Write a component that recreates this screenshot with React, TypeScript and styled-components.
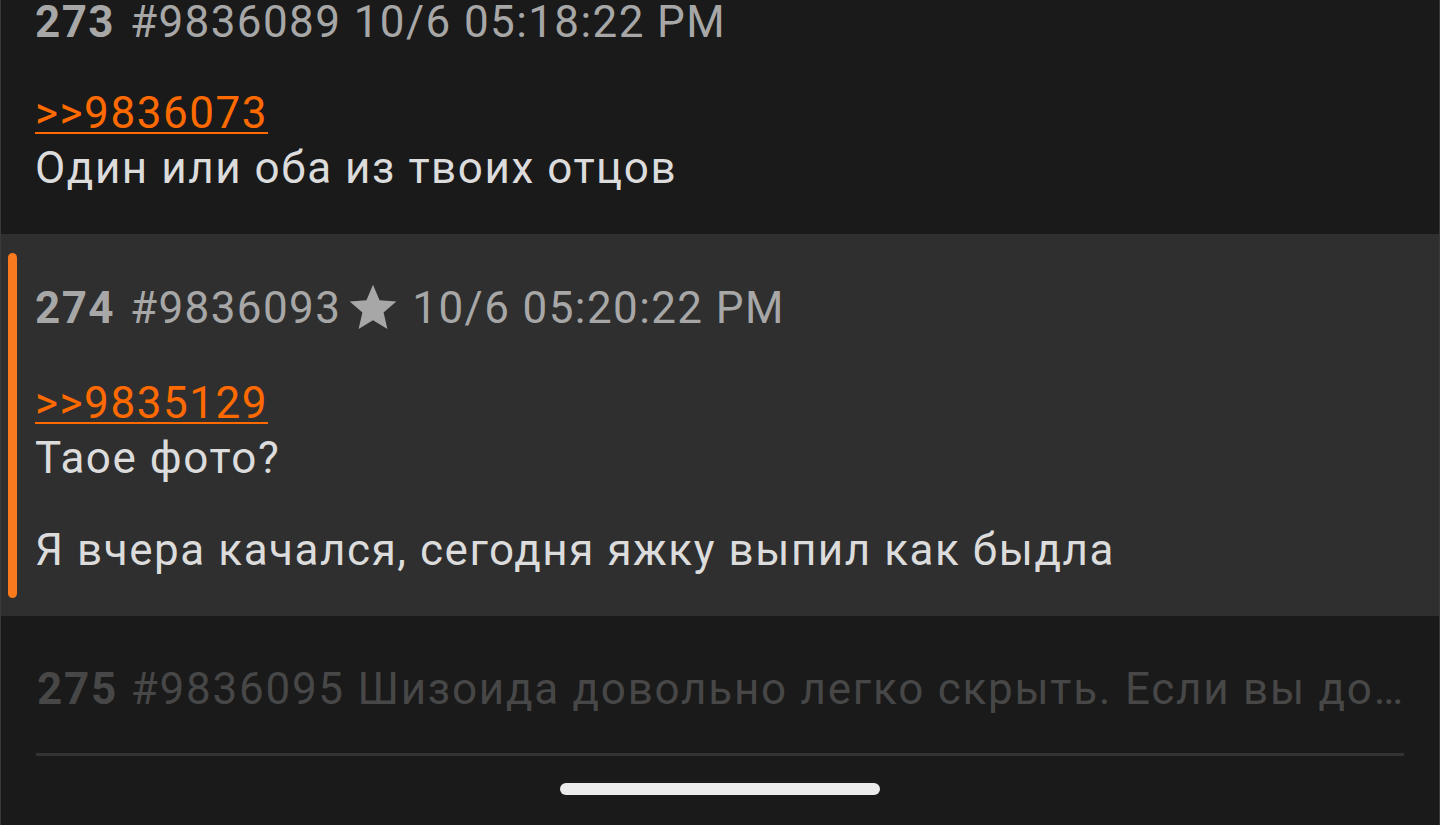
import React from "react";
import styled, { createGlobalStyle } from "styled-components";

const GlobalStyle = createGlobalStyle`
  html, body { margin: 0; padding: 0; background: #1a1a1a; }
  body { font-family: Roboto, "Noto Sans", sans-serif; overflow: hidden; }
`;

const Screen = styled.div`
  width: 1440px;
  height: 825px;
  box-sizing: border-box;
  overflow: hidden;
  background: #1a1a1a;
  border-left: 1px solid #3a3a3a;
  border-right: 1px solid #3a3a3a;
  display: flex;
  flex-direction: column;
`;

const List = styled.div`
  margin-top: -48px;
  display: flex;
  flex-direction: column;
`;

const Post = styled.article<{ $highlight?: boolean }>`
  position: relative;
  background: ${(p) => (p.$highlight ? "#2f2f2f" : "transparent")};
  padding: 46px 34px 42px 34px;
  font-size: 44px;
  line-height: 48px;
  letter-spacing: 1.4px;
`;

const Marker = styled.span`
  position: absolute;
  left: 7px;
  top: 19px;
  bottom: 18px;
  width: 9px;
  border-radius: 5px;
  background: #f87a1c;
`;

const Header = styled.div`
  display: flex;
  align-items: center;
  color: #a7a7a7;
  white-space: nowrap;
`;

const Num = styled.span`
  font-weight: 700;
  margin-right: 15px;
`;

const Star = styled.svg`
  width: 56px;
  height: 56px;
  margin: 0 11px 0 4px;
  fill: #a7a7a7;
`;

const Body = styled.div`
  margin-top: 43px;
  color: #dcdcdc;
  letter-spacing: 1.55px;
`;

const Reply = styled.a`
  display: block;
  width: fit-content;
  color: #ff6a00;
  text-decoration: underline;
  text-decoration-thickness: 2px;
  text-underline-offset: 4px;
  margin-bottom: 7px;
`;

const Para = styled.p`
  margin: 0;
`;

const Gap = styled.div`
  height: 44px;
`;

const Collapsed = styled.div`
  padding: 49px 35px 40px 36px;
  font-size: 44px;
  line-height: 48px;
  letter-spacing: 1.75px;
  color: #474747;
  white-space: nowrap;
  overflow: hidden;
  text-overflow: ellipsis;
`;

const CollapsedNum = styled.span`
  font-weight: 700;
`;

const Divider = styled.div`
  height: 3px;
  margin: 0 35px;
  background: #333333;
`;

const HomeBar = styled.div`
  align-self: center;
  width: 320px;
  height: 12px;
  border-radius: 6px;
  background: #ebebeb;
  margin-top: 27px;
`;

export default function App() {
  return (
    <>
      <GlobalStyle />
      <Screen>
        <List>
          <Post>
            <Header>
              <Num>273</Num>#9836089 10/6 05:18:22 PM
            </Header>
            <Body>
              <Reply>&gt;&gt;9836073</Reply>
              <Para>Один или оба из твоих отцов</Para>
            </Body>
          </Post>
          <Post $highlight>
            <Marker />
            <Header>
              <Num>274</Num>#9836093
              <Star viewBox="0 0 24 24">
                <path d="M12 17.27L18.18 21l-1.64-7.03L22 9.24l-7.19-.61L12 2 9.19 8.63 2 9.24l5.46 4.73L5.82 21z" />
              </Star>
              10/6 05:20:22 PM
            </Header>
            <Body>
              <Reply>&gt;&gt;9835129</Reply>
              <Para>Таое фото?</Para>
              <Gap />
              <Para>Я вчера качался, сегодня яжку выпил как быдла</Para>
            </Body>
          </Post>
          <Collapsed>
            <CollapsedNum>275</CollapsedNum> #9836095 Шизоида довольно легко скрыть. Если вы достаточно умны, то никто ничего не заметит
          </Collapsed>
          <Divider />
        </List>
        <HomeBar />
      </Screen>
    </>
  );
}
